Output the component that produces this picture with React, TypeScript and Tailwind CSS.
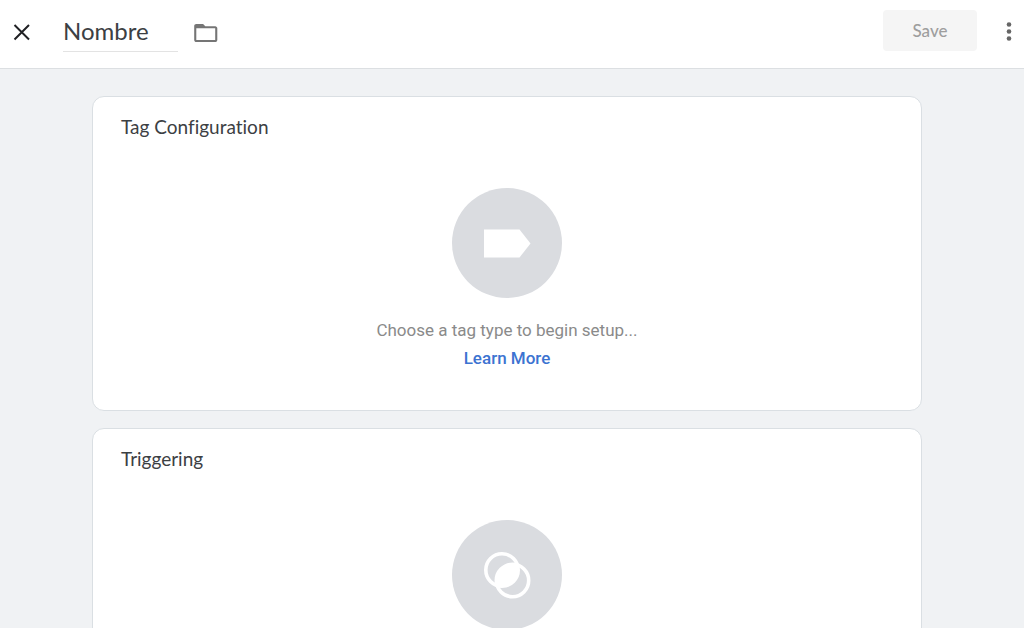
import type { ReactNode } from "react";

function TagIcon() {
  return (
    <svg viewBox="0 0 110 110" className="h-[110px] w-[110px]" aria-hidden="true">
      <circle cx="55" cy="55" r="55" fill="#dadce0" />
      <path d="M32 41.500h35.500L78.500 55.500l-11 14H32z" fill="#fff" />
    </svg>
  );
}

function TriggerIcon() {
  return (
    <svg viewBox="0 0 110 110" className="h-[110px] w-[110px]" aria-hidden="true">
      <defs>
        <clipPath id="overlap">
          <circle cx="50" cy="50" r="17" />
        </clipPath>
      </defs>
      <circle cx="55" cy="55" r="55" fill="#dadce0" />
      <circle cx="60.5" cy="60.5" r="17" fill="#fff" clipPath="url(#overlap)" />
      <g fill="none" stroke="#fff" strokeWidth="3.6">
        <circle cx="50" cy="50" r="16.200" />
        <circle cx="60.5" cy="60.5" r="16.200" />
      </g>
    </svg>
  );
}

function Card({ title, icon, children }: { title: string; icon: ReactNode; children?: ReactNode }) {
  return (
    <section className="shrink-0 rounded-xl border border-[#dadfe3] bg-white px-7 pt-4 pb-[38px]">
      <h2 className="font-['Lato',sans-serif] text-[19px] leading-7 text-[#3c4043] [font-variant-ligatures:none]">{title}</h2>
      <div className="mt-[47px] flex flex-col items-center">
        {icon}
        {children}
      </div>
    </section>
  );
}

export default function App() {
  return (
    <div className="flex h-screen flex-col bg-[#f0f2f4] font-['Roboto',sans-serif]">
      <header className="flex h-[69px] shrink-0 items-start border-b border-[#dcdfe2] bg-white pt-[10px] pr-[3px] pl-3">
        <button type="button" aria-label="Close" className="mt-3 flex h-5 w-5 items-center justify-center">
          <svg viewBox="0 0 20 20" className="h-5 w-5" fill="none" stroke="#202124" strokeWidth="2">
            <path d="M2.500 3l14.500 14.500M17 3L2.500 17.500" />
          </svg>
        </button>
        <input
          type="text"
          aria-label="Name"
          defaultValue="Nombre"
          className="ml-[31px] h-[42px] w-[115px] border-b border-[#e3e3e3] font-['Lato',sans-serif] text-[24px] text-[#3c4043] outline-none"
        />
        <button type="button" aria-label="Choose folder" className="ml-4 mt-[13px]">
          <svg viewBox="0 0 24 20" className="h-5 w-6" aria-hidden="true">
            <path
              fillRule="evenodd"
              fill="#757575"
              d="M2.300 1h6.800l2.200 2.200h9.900c1.200 0 2.100 1 2.100 2.100v11.600c0 1.200-.9 2.100-2.100 2.100H2.300C1.100 19 .2 18.100 .2 16.900V3.100C.2 1.900 1.100 1 2.300 1zM2.300 5.300v11.600h18.900V5.300z"
            />
          </svg>
        </button>
        <button
          type="button"
          disabled
          className="ml-auto h-[41px] w-[94px] rounded bg-[#f5f5f5] font-['Lato',sans-serif] text-[17px] font-medium text-[#9e9e9e]"
        >
          Save
        </button>
        <button type="button" aria-label="More actions" className="mt-[10px] ml-5 flex h-6 w-6 items-center justify-center">
          <svg viewBox="0 0 24 24" className="h-6 w-6" fill="#666">
            <circle cx="12" cy="4.500" r="2.300" />
            <circle cx="12" cy="11.500" r="2.300" />
            <circle cx="12" cy="18.500" r="2.300" />
          </svg>
        </button>
      </header>

      <main className="flex min-h-0 flex-1 flex-col gap-[17px] overflow-y-auto pt-[27px] pr-[102px] pl-[92px] [scrollbar-width:none]">
        <Card title="Tag Configuration" icon={<TagIcon />}>
          <p className="mt-[18px] text-[17px] leading-7 text-[#8a8a8a]">Choose a tag type to begin setup...</p>
          <a href="#" className="text-[17px] leading-7 font-medium text-[#3c73d1]">
            Learn More
          </a>
        </Card>
        <Card title="Triggering" icon={<TriggerIcon />} />
      </main>
    </div>
  );
}
